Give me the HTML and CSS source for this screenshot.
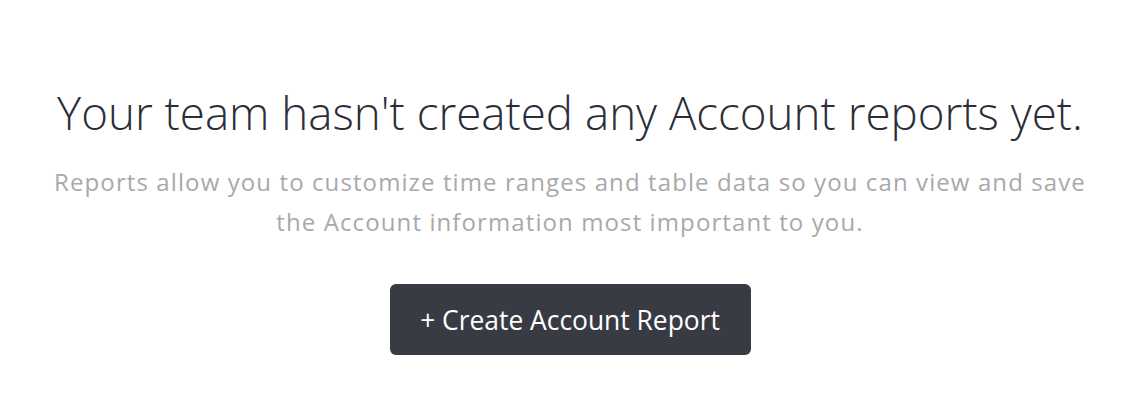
FILE: index.html
```html
<!DOCTYPE html>
<html lang="en">
<head>
  <meta charset="UTF-8" />
  <title>Account Reports</title>
  <link rel="stylesheet" href="styles.css">
</head>
<body>
  <div class="empty-state">
    <h1 class="empty-title">Your team hasn't created any Account reports yet.</h1>
    <p class="empty-text">Reports allow you to customize time ranges and table data so you can view and save the Account information most important to you.</p>
    <button class="btn" type="button">+ Create Account Report</button>
  </div>
</body>
</html>
```

FILE: styles.css
```css
body {
  margin: 0;
  font-family: 'Open Sans', Lato, sans-serif;
  background-color: #fff;
}

.empty-state {
  display: flex;
  flex-direction: column;
  align-items: center;
  text-align: center;
  padding-top: 84px;
}

.empty-title {
  margin: 0;
  font-size: 45.7px;
  font-weight: 300;
  line-height: 56px;
  color: #2b2e38;
}

.empty-text {
  margin: 22px 0 0;
  max-width: 1060px;
  font-size: 24px;
  letter-spacing: 1.1px;
  line-height: 40px;
  color: #a9a9ab;
}

.btn {
  margin-top: 42px;
  width: 361px;
  height: 71px;
  background-color: #393b44;
  color: #fff;
  border: none;
  border-radius: 6px;
  font-family: inherit;
  font-size: 26.4px;
  font-weight: 500;
  cursor: pointer;
}
```
